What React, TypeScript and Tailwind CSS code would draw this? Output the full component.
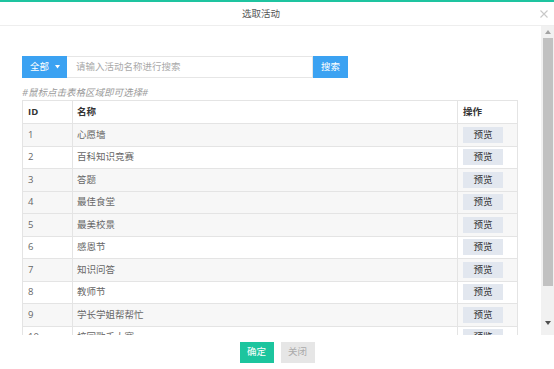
import React from 'react';

const rows = [
  { id: 1, name: '心愿墙' },
  { id: 2, name: '百科知识竞赛' },
  { id: 3, name: '答题' },
  { id: 4, name: '最佳食堂' },
  { id: 5, name: '最美校景' },
  { id: 6, name: '感恩节' },
  { id: 7, name: '知识问答' },
  { id: 8, name: '教师节' },
  { id: 9, name: '学长学姐帮帮忙' },
  { id: 10, name: '校园歌手大赛' },
  { id: 11, name: '读书月' },
];

export default function App() {
  return (
    <div
      className="w-[554px] h-[369px] bg-white flex flex-col overflow-hidden text-[#555]"
      style={{ fontFamily: '"Open Sans", "Noto Sans CJK SC", sans-serif' }}
    >
      {/* Header */}
      <div className="relative h-[26px] shrink-0 border-t-2 border-[#1ec4a0] border-b border-b-[#eeeeee] flex items-center justify-center pr-[32px]">
        <span className="text-[9.5px] leading-none text-[#555]">选取活动</span>
        <svg className="absolute right-[6px] top-[8px]" width="8" height="8" viewBox="0 0 8 8">
          <path d="M0.5 0.5 L7.5 7.5 M7.5 0.5 L0.5 7.5" stroke="#c8c8c8" strokeWidth="1.1" />
        </svg>
      </div>

      {/* Body */}
      <div className="flex h-[309px] shrink-0">
        <div className="flex-1 overflow-hidden pl-[22px] pr-[23px] pt-[30px]">
          {/* Search row */}
          <div className="flex h-[22px]">
            <div className="w-[45px] bg-[#3ba2f2] text-white text-[9.5px] flex items-center pl-[8px] gap-[6px]">
              <span>全部</span>
              <svg width="5" height="4" viewBox="0 0 5 4">
                <path d="M0 0 L5 0 L2.5 3.5 Z" fill="white" />
              </svg>
            </div>
            <div className="w-[246px] border border-[#e6e6e6] border-l-0 flex items-center pl-[9px] text-[9.5px] text-[#aaa]">
              请输入活动名称进行搜索
            </div>
            <div className="w-[35px] bg-[#3ba2f2] text-white text-[9.5px] flex items-center justify-center">
              搜索
            </div>
          </div>

          {/* Hint */}
          <div className="h-[22px] pt-[9px] text-[9.5px] leading-[12px] italic text-[#9a9a9a]">
            #鼠标点击表格区域即可选择#
          </div>

          {/* Table */}
          <table className="w-[496px] border-collapse text-[9.5px]">
            <thead>
              <tr className="h-[23px] bg-white">
                <th className="w-[50px] border border-[#e4e4e4] text-left pl-[5px] font-bold text-[#333]">ID</th>
                <th className="border border-[#e4e4e4] text-left pl-[4px] font-bold text-[#333]">名称</th>
                <th className="w-[60px] border border-[#e4e4e4] text-left pl-[5px] font-bold text-[#333]">操作</th>
              </tr>
            </thead>
            <tbody>
              {rows.map((r) => {
                const gray = r.id % 2 === 1 || r.id === 4;
                return (
                  <tr key={r.id} className={gray ? 'h-[22.5px] bg-[#f7f7f7]' : 'h-[22.5px] bg-white'}>
                    <td className="border border-[#e4e4e4] pl-[5px] text-[#666]">{r.id}</td>
                    <td className="border border-[#e4e4e4] pl-[4px] text-[#666]">{r.name}</td>
                    <td className="border border-[#e4e4e4] pl-[5px]">
                      <div className="w-[40px] h-[16px] bg-[#e2e7ef] text-[#333] flex items-center justify-center">
                        预览
                      </div>
                    </td>
                  </tr>
                );
              })}
            </tbody>
          </table>
        </div>

        {/* Scrollbar */}
        <div className="w-[13px] bg-[#f1f1f1] flex flex-col items-center">
          <div className="h-[12px] flex items-center justify-center">
            <svg width="6" height="4" viewBox="0 0 6 4">
              <path d="M0 4 L3 0 L6 4 Z" fill="#a3a3a3" />
            </svg>
          </div>
          <div className="w-[10px] h-[248px] bg-[#c1c1c1]" />
          <div className="flex-1" />
          <div className="h-[16px] flex items-start justify-center pt-[2px]">
            <svg width="6" height="4" viewBox="0 0 6 4">
              <path d="M0 0 L6 0 L3 4 Z" fill="#505050" />
            </svg>
          </div>
        </div>
      </div>

      {/* Footer */}
      <div className="flex justify-center gap-[7px] pt-[7px]">
        <div className="w-[34px] h-[21px] bg-[#1cc59e] text-white text-[9.5px] flex items-center justify-center">
          确定
        </div>
        <div className="w-[34px] h-[21px] bg-[#e6e6e6] text-[#aaa] text-[9.5px] flex items-center justify-center">
          关闭
        </div>
      </div>
    </div>
  );
}
